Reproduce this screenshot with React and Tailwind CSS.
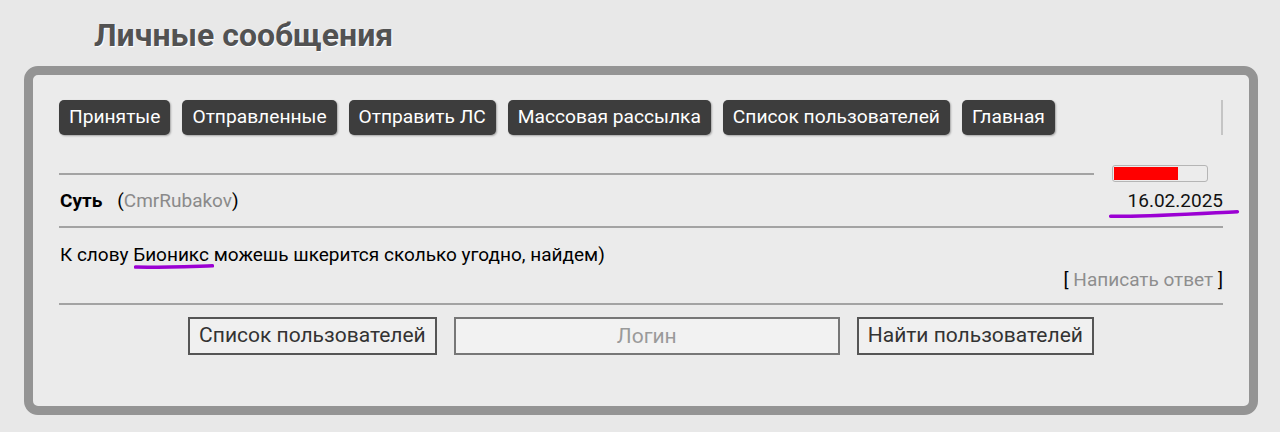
import React from 'react';

const navItems = ['Принятые', 'Отправленные', 'Отправить ЛС', 'Массовая рассылка', 'Список пользователей', 'Главная'];

const Scribble = ({ className, d }) => (
    <svg className={className} viewBox="0 0 100 10" preserveAspectRatio="none" fill="none">
        <path d={d} stroke="#9b00d3" strokeWidth="3.5" strokeLinecap="round" vectorEffect="non-scaling-stroke" />
    </svg>
);

const App = () => {
    return (
        <div className="h-[432px] bg-[#e8e8e8] overflow-hidden pt-[14px]" style={{ fontFamily: 'Roboto, "Noto Sans", sans-serif' }}>
            <h1 className="pl-[94px] text-[32px] leading-[42px] font-bold text-[#525252] [text-shadow:1px_1px_1px_#ffffff]">
                Личные сообщения
            </h1>

            <div className="mt-[10px] ml-[24px] mr-[22px] border-[9px] border-[#949494] rounded-[14px] bg-[#ebebeb] px-[26px] pt-[25px] pb-[51px]">
                {/* top menu */}
                <div className="flex items-center gap-[12px] border-r-2 border-[#c4c4c4]">
                    {navItems.map((item) => (
                        <a
                            key={item}
                            href="#"
                            className="h-[35px] px-[10px] flex items-center bg-[#3d3d3d] text-white text-[19.2px] rounded-[5px] shadow-[1px_1px_2px_rgba(0,0,0,0.3)]"
                        >
                            {item}
                        </a>
                    ))}
                </div>

                {/* message header */}
                <div className="mt-[30px] flex items-center">
                    <div className="flex-1 h-[2px] bg-[#a3a3a3]"></div>
                    <div className="ml-[18px] mr-[15px] w-[96px] h-[17px] border border-[#b5b5b5] rounded-[3px] bg-[#ececec] p-[1px]">
                        <div className="h-full w-[70%] bg-[#ff0000]"></div>
                    </div>
                </div>
                <div className="flex items-center justify-between h-[38px] pl-[1px]">
                    <div className="text-[19px] text-black">
                        <b>Суть</b>
                        <span className="ml-[15px]">(</span>
                        <span className="text-[#8a8a8a]">CmrRubakov</span>
                        <span>)</span>
                    </div>
                    <span className="relative text-[19px] text-[#111]">
                        16.02.2025
                        <Scribble className="absolute left-[-20px] top-[22px] w-[132px] h-[9px]" d="M2 8 C 30 9, 60 6, 98 3" />
                    </span>
                </div>
                <div className="mt-[6px] h-[2px] bg-[#a3a3a3]"></div>

                {/* message body */}
                <div className="mt-[15px] pl-[1px] text-[19px] leading-[24px] text-black">
                    К слову{' '}
                    <span className="relative">
                        Бионикс
                        <Scribble className="absolute left-[1px] top-[21px] w-[80px] h-[6px]" d="M2 5 C 30 6, 70 4, 98 3" />
                    </span>{' '}
                    можешь шкерится сколько угодно, найдем)
                </div>
                <div className="text-right text-[19px] leading-[24px] mt-[1px]">
                    <span className="text-black">[ </span>
                    <a href="#" className="text-[#8e8e8e]">Написать ответ</a>
                    <span className="text-black"> ]</span>
                </div>
                <div className="mt-[11px] h-[2px] bg-[#a3a3a3]"></div>

                {/* search row */}
                <div className="mt-[12px] flex justify-center items-center gap-[17px]">
                    <button className="h-[38px] px-[9px] border-2 border-[#555] bg-[#f0f0f0] text-[21px] text-[#333]">
                        Список пользователей
                    </button>
                    <input
                        placeholder="Логин"
                        className="w-[386px] h-[38px] border-2 border-[#777] bg-[#f2f2f2] text-center text-[21px] placeholder:text-[#9a9a9a] outline-none"
                    />
                    <button className="h-[38px] px-[9px] border-2 border-[#555] bg-[#f0f0f0] text-[21px] text-[#333]">
                        Найти пользователей
                    </button>
                </div>
            </div>
        </div>
    );
};

export default App;
